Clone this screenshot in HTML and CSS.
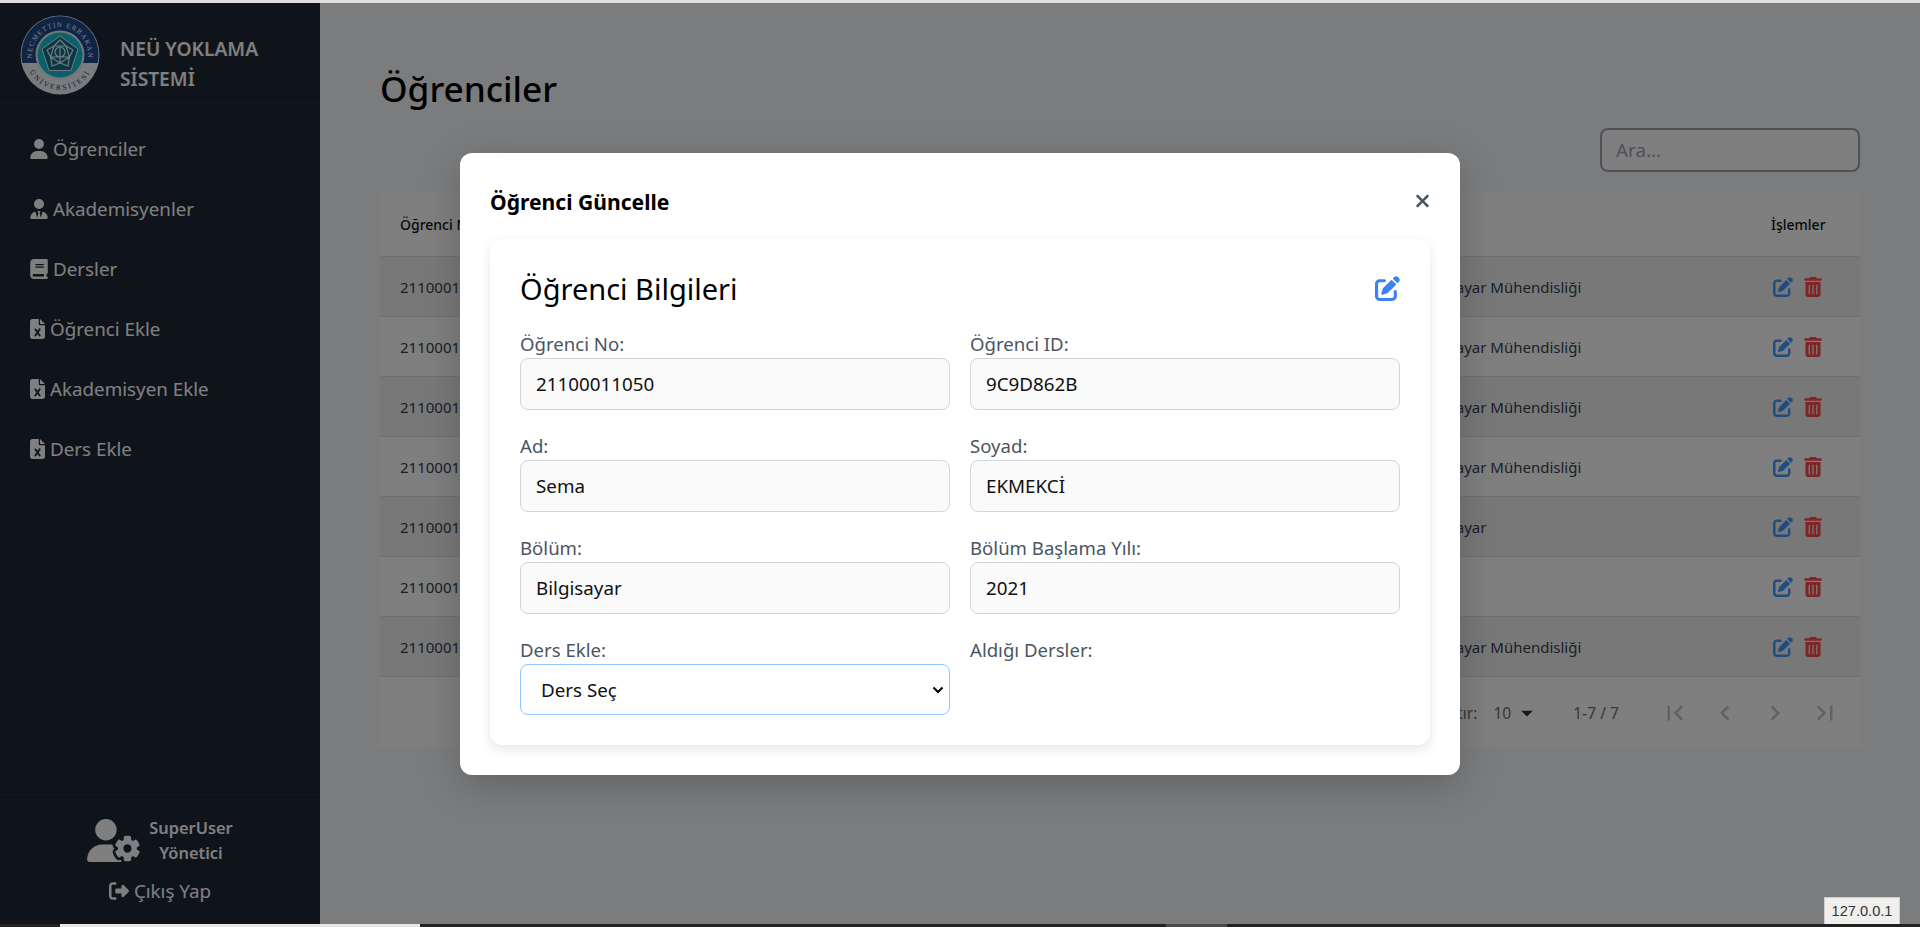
FILE: index.html
```html
<!DOCTYPE html>
<html lang="tr">
<head>
<meta charset="utf-8">
<title>NEÜ Yoklama Sistemi</title>
<link rel="stylesheet" href="styles.css">
</head>
<body>
<svg class="defs" aria-hidden="true">
  <symbol id="i-user" viewBox="0 0 448 512"><path d="M224 256A128 128 0 1 0 224 0a128 128 0 1 0 0 256zm-45.7 48C79.8 304 0 383.8 0 482.3C0 498.7 13.3 512 29.7 512H418.3c16.4 0 29.7-13.3 29.7-29.7C448 383.8 368.2 304 269.7 304H178.3z"/></symbol>
  <symbol id="i-tie" viewBox="0 0 448 512"><path d="M96 128a128 128 0 1 0 256 0A128 128 0 1 0 96 128zm94.5 200.2l18.6 31L175.8 483.1l-36-146.9c-2-8.1-9.8-13.4-17.9-11.3C51.9 342.4 0 405.8 0 481.3c0 17 13.8 30.7 30.7 30.7H162.5c0 0 0 0 .1 0H168 280h5.5c0 0 0 0 .1 0H417.3c17 0 30.7-13.8 30.7-30.7c0-75.5-51.9-138.9-121.9-156.4c-8.1-2-15.9 3.3-17.9 11.3l-36 146.9L238.9 359.2l18.6-31c6.4-10.7-1.3-24.2-13.7-24.2H224 204.3c-12.4 0-20.1 13.6-13.7 24.2z"/></symbol>
  <symbol id="i-book" viewBox="0 0 448 512"><path d="M96 0C43 0 0 43 0 96V416c0 53 43 96 96 96H384h32c17.7 0 32-14.3 32-32s-14.3-32-32-32V384c17.7 0 32-14.3 32-32V32c0-17.7-14.3-32-32-32H384 96zm0 384H352v64H96c-17.7 0-32-14.3-32-32s14.3-32 32-32zm32-240c0-8.8 7.2-16 16-16H336c8.8 0 16 7.2 16 16s-7.2 16-16 16H144c-8.8 0-16-7.2-16-16zm16 48H336c8.8 0 16 7.2 16 16s-7.2 16-16 16H144c-8.8 0-16-7.2-16-16s7.2-16 16-16z"/></symbol>
  <symbol id="i-excel" viewBox="0 0 384 512"><path d="M64 0C28.7 0 0 28.7 0 64V448c0 35.3 28.7 64 64 64H320c35.3 0 64-28.7 64-64V160H256c-17.7 0-32-14.3-32-32V0H64zM256 0V128H384L256 0zM155.7 250.2L192 302.1l36.3-51.9c7.6-10.9 22.6-13.5 33.4-5.9s13.5 22.6 5.9 33.4L221.3 344l46.4 66.2c7.6 10.9 5 25.8-5.9 33.4s-25.8 5-33.4-5.9L192 385.8l-36.3 51.9c-7.6 10.9-22.6 13.5-33.4 5.9s-13.5-22.6-5.9-33.4L162.7 344l-46.4-66.2c-7.6-10.9-5-25.8 5.9-33.4s25.8-5 33.4 5.9z"/></symbol>
  <symbol id="i-gear" viewBox="0 0 640 512"><path d="M224 0a128 128 0 1 1 0 256A128 128 0 1 1 224 0zM178.3 304h91.4c11.8 0 23.4 1.2 34.5 3.3c-2.1 18.5 7.4 35.6 21.8 44.8c-16.6 10.6-26.7 31.6-20 53.3c4 12.9 9.4 25.5 16.4 37.6s15.2 23.1 24.4 33c15.7 16.9 39.6 18.4 57.2 8.7v.9c0 9.2 2.7 18.5 7.9 26.3H29.7C13.3 512 0 498.7 0 482.3C0 383.8 79.8 304 178.3 304zM436 218.2c0-7 4.5-13.3 11.3-14.8c10.5-2.4 21.5-3.7 32.7-3.7s22.2 1.3 32.7 3.7c6.8 1.5 11.3 7.8 11.3 14.8v30.6c7.9 3.4 15.4 7.7 22.3 12.8l24.9-14.3c6.1-3.5 13.7-2.7 18.5 2.4c7.6 8.1 14.3 17.2 20.1 27.2s10.3 20.4 13.5 31c2.1 6.7-1.1 13.7-7.2 17.2l-25 14.4c.4 4 .7 8.1 .7 12.3s-.2 8.2-.7 12.3l25 14.4c6.1 3.5 9.2 10.5 7.2 17.2c-3.3 10.6-7.8 21-13.5 31s-12.5 19.1-20.1 27.2c-4.8 5.1-12.5 5.9-18.5 2.4l-24.9-14.3c-6.9 5.1-14.3 9.4-22.3 12.8l0 30.6c0 7-4.5 13.3-11.3 14.8c-10.5 2.4-21.5 3.7-32.7 3.7s-22.2-1.3-32.7-3.7c-6.8-1.5-11.3-7.8-11.3-14.8V454.8c-8-3.4-15.6-7.7-22.5-12.9l-24.7 14.3c-6.1 3.5-13.7 2.7-18.5-2.4c-7.6-8.1-14.3-17.2-20.1-27.2s-10.3-20.4-13.5-31c-2.1-6.7 1.1-13.7 7.2-17.2l24.8-14.3c-.4-4.1-.7-8.2-.7-12.4s.2-8.3 .7-12.4L343.8 325c-6.1-3.5-9.2-10.5-7.2-17.2c3.3-10.6 7.7-21 13.5-31s12.5-19.1 20.1-27.2c4.8-5.1 12.4-5.9 18.5-2.4l24.8 14.3c6.9-5.1 14.5-9.4 22.5-12.9V218.2zm92.1 133.5a48.1 48.1 0 1 0 -96.1 0 48.1 48.1 0 1 0 96.1 0z"/></symbol>
  <symbol id="i-logout" viewBox="0 0 512 512"><path d="M377.9 105.9L500.7 228.7c7.2 7.2 11.3 17.1 11.3 27.3s-4.1 20.1-11.3 27.3L377.9 406.1c-6.4 6.4-15 9.9-24 9.9c-18.7 0-33.9-15.2-33.9-33.9l0-62.1-128 0c-17.7 0-32-14.3-32-32l0-64c0-17.7 14.3-32 32-32l128 0 0-62.1c0-18.7 15.2-33.9 33.9-33.9c9 0 17.6 3.6 24 9.9zM160 96L96 96c-17.7 0-32 14.3-32 32l0 256c0 17.7 14.3 32 32 32l64 0c17.7 0 32 14.3 32 32s-14.3 32-32 32l-64 0c-53 0-96-43-96-96L0 128C0 75 43 32 96 32l64 0c17.7 0 32 14.3 32 32s-14.3 32-32 32z"/></symbol>
  <symbol id="i-edit" viewBox="0 0 512 512"><path d="M471.6 21.7c-21.9-21.9-57.3-21.9-79.2 0L362.3 51.7l97.9 97.9 30.1-30.1c21.9-21.9 21.9-57.3 0-79.2L471.6 21.7zm-299.2 220c-6.1 6.1-10.8 13.6-13.5 21.9l-29.6 88.8c-2.9 8.6-.6 18.1 5.8 24.6s15.9 8.7 24.6 5.8l88.8-29.6c8.2-2.7 15.7-7.4 21.9-13.5L437.7 172.3 339.7 74.3 172.4 241.7zM96 64C43 64 0 107 0 160V416c0 53 43 96 96 96H352c53 0 96-43 96-96V320c0-17.7-14.3-32-32-32s-32 14.3-32 32v96c0 17.7-14.3 32-32 32H96c-17.7 0-32-14.3-32-32V160c0-17.7 14.3-32 32-32h96c17.7 0 32-14.3 32-32s-14.3-32-32-32H96z"/></symbol>
  <symbol id="i-trash" viewBox="0 0 448 512"><path d="M135.2 17.7C140.6 6.8 151.7 0 163.8 0H284.2c12.1 0 23.2 6.8 28.6 17.7L320 32h96c17.7 0 32 14.3 32 32s-14.3 32-32 32H32C14.3 96 0 81.7 0 64S14.3 32 32 32h96l7.2-14.3zM32 128H416V448c0 35.3-28.7 64-64 64H96c-35.3 0-64-28.7-64-64V128zm96 64c-8.8 0-16 7.2-16 16V432c0 8.8 7.2 16 16 16s16-7.2 16-16V208c0-8.8-7.2-16-16-16zm96 0c-8.8 0-16 7.2-16 16V432c0 8.8 7.2 16 16 16s16-7.2 16-16V208c0-8.8-7.2-16-16-16zm96 0c-8.8 0-16 7.2-16 16V432c0 8.8 7.2 16 16 16s16-7.2 16-16V208c0-8.8-7.2-16-16-16z"/></symbol>
  <symbol id="i-x" viewBox="0 0 384 512"><path d="M342.6 150.6c12.5-12.5 12.5-32.8 0-45.3s-32.8-12.5-45.3 0L192 210.7 86.6 105.4c-12.5-12.5-32.8-12.5-45.3 0s-12.5 32.8 0 45.3L146.7 256 41.4 361.4c-12.5 12.5-12.5 32.8 0 45.3s32.8 12.5 45.3 0L192 301.3 297.4 406.6c12.5 12.5 32.8 12.5 45.3 0s12.5-32.8 0-45.3L237.3 256 342.6 150.6z"/></symbol>
  <symbol id="i-first" viewBox="0 0 24 24"><path d="M18.41 16.59L13.82 12l4.59-4.59L17 6l-6 6 6 6zM6 6h2v12H6z"/></symbol>
  <symbol id="i-prev" viewBox="0 0 24 24"><path d="M15.41 16.59L10.83 12l4.58-4.59L14 6l-6 6 6 6z"/></symbol>
  <symbol id="i-next" viewBox="0 0 24 24"><path d="M8.59 16.59L13.17 12 8.59 7.41 10 6l6 6-6 6z"/></symbol>
  <symbol id="i-last" viewBox="0 0 24 24"><path d="M5.59 7.41L10.18 12l-4.59 4.59L7 18l6-6-6-6zM16 6h2v12h-2z"/></symbol>
  <symbol id="i-caret" viewBox="0 0 24 24"><path d="M7 10l5 5 5-5z"/></symbol>
</svg>

<div class="strip-top"></div>

<div class="app">
  <aside class="sidebar">
    <header class="brand">
      <svg class="logo" viewBox="0 0 80 80" role="img" aria-label="Necmettin Erbakan Üniversitesi">
        <defs>
          <path id="arc-top" d="M13.5 49 A28 28 0 1 1 66.5 49"/>
          <path id="arc-bottom" d="M6.8 51 A35 35 0 0 0 73.2 51"/>
        </defs>
        <circle class="l-rim" cx="40" cy="40" r="39.5"/>
        <path class="l-navy" d="M2.4 48 A38.5 38.5 0 1 1 77.6 48 Z"/>
        <text class="l-text"><textPath href="#arc-top" startOffset="50%" text-anchor="middle">NECMETTİN ERBAKAN</textPath></text>
        <text class="l-text-b"><textPath href="#arc-bottom" startOffset="50%" text-anchor="middle">ÜNİVERSİTESİ</textPath></text>
        <circle class="l-ring" cx="40" cy="40" r="24.5"/>
        <circle class="l-teal" cx="40" cy="40" r="22.5"/>
        <path class="l-star" d="M40 21 L58 34 L51 55.5 L29 55.5 L22 34 Z"/>
        <path class="l-knot" d="M40 25 L46 31 L53 35 L49.5 42 L48 51 L40 48 L32 51 L30.5 42 L27 35 L34 31 Z M34 31 L46 31 L49.5 42 L40 48 L30.5 42 Z M40 31 V48 M30.5 42 L49.5 42 M35 37 a5 5 0 1 0 10 0 a5 5 0 1 0 -10 0"/>
      </svg>
      <div class="brand-name">NEÜ YOKLAMA SİSTEMİ</div>
    </header>

    <nav class="menu">
      <a class="menu-item"><svg class="ic ic-u"><use href="#i-user"/></svg>Öğrenciler</a>
      <a class="menu-item"><svg class="ic ic-u"><use href="#i-tie"/></svg>Akademisyenler</a>
      <a class="menu-item"><svg class="ic ic-u"><use href="#i-book"/></svg>Dersler</a>
      <a class="menu-item"><svg class="ic ic-f"><use href="#i-excel"/></svg>Öğrenci Ekle</a>
      <a class="menu-item"><svg class="ic ic-f"><use href="#i-excel"/></svg>Akademisyen Ekle</a>
      <a class="menu-item"><svg class="ic ic-f"><use href="#i-excel"/></svg>Ders Ekle</a>
    </nav>

    <footer class="side-foot">
      <div class="who">
        <svg class="ic-who"><use href="#i-gear"/></svg>
        <div class="who-text">SuperUser<br>Yönetici</div>
      </div>
      <a class="logout"><svg class="ic-out"><use href="#i-logout"/></svg>Çıkış Yap</a>
    </footer>
  </aside>

  <main class="content">
    <h1 class="page-title">Öğrenciler</h1>
    <div class="tools">
      <input class="search" type="text" placeholder="Ara...">
    </div>
    <section class="table-box">
      <table class="grid">
        <colgroup>
          <col class="c1"><col class="c2"><col class="c3"><col class="c4"><col class="c5">
        </colgroup>
        <thead>
          <tr><th>Öğrenci No</th><th>Ad</th><th>Soyad</th><th class="th-dept">Bölüm</th><th>İşlemler</th></tr>
        </thead>
        <tbody>
          <tr><td>21100011050</td><td>Sema</td><td>EKMEKCİ</td><td>Bilgisayar Mühendisliği</td><td><span class="acts"><svg class="a-edit"><use href="#i-edit"/></svg><svg class="a-del"><use href="#i-trash"/></svg></span></td></tr>
          <tr><td>21100011051</td><td>Ali</td><td>YILMAZ</td><td>Bilgisayar Mühendisliği</td><td><span class="acts"><svg class="a-edit"><use href="#i-edit"/></svg><svg class="a-del"><use href="#i-trash"/></svg></span></td></tr>
          <tr><td>21100011052</td><td>Ayşe</td><td>KAYA</td><td>Bilgisayar Mühendisliği</td><td><span class="acts"><svg class="a-edit"><use href="#i-edit"/></svg><svg class="a-del"><use href="#i-trash"/></svg></span></td></tr>
          <tr><td>21100011053</td><td>Mehmet</td><td>DEMİR</td><td>Bilgisayar Mühendisliği</td><td><span class="acts"><svg class="a-edit"><use href="#i-edit"/></svg><svg class="a-del"><use href="#i-trash"/></svg></span></td></tr>
          <tr><td>21100011054</td><td>Zeynep</td><td>ÇELİK</td><td>Bilgisayar</td><td><span class="acts"><svg class="a-edit"><use href="#i-edit"/></svg><svg class="a-del"><use href="#i-trash"/></svg></span></td></tr>
          <tr><td>21100011055</td><td>Can</td><td>ŞAHİN</td><td>Fizik</td><td><span class="acts"><svg class="a-edit"><use href="#i-edit"/></svg><svg class="a-del"><use href="#i-trash"/></svg></span></td></tr>
          <tr><td>21100011056</td><td>Elif</td><td>ARSLAN</td><td>Bilgisayar Mühendisliği</td><td><span class="acts"><svg class="a-edit"><use href="#i-edit"/></svg><svg class="a-del"><use href="#i-trash"/></svg></span></td></tr>
        </tbody>
      </table>
      <div class="pager">
        <span class="pg-label">Sayfa başına satır:</span>
        <span class="pg-size">10<svg class="pg-caret"><use href="#i-caret"/></svg></span>
        <span class="pg-range">1-7 / 7</span>
        <span class="pg-btns">
          <svg class="pg-ic"><use href="#i-first"/></svg>
          <svg class="pg-ic"><use href="#i-prev"/></svg>
          <svg class="pg-ic"><use href="#i-next"/></svg>
          <svg class="pg-ic"><use href="#i-last"/></svg>
        </span>
      </div>
    </section>
  </main>

  <div class="overlay">
    <div class="modal">
      <div class="modal-head">
        <h2 class="modal-title">Öğrenci Güncelle</h2>
        <svg class="modal-x"><use href="#i-x"/></svg>
      </div>
      <div class="card">
        <div class="card-head">
          <h3 class="card-title">Öğrenci Bilgileri</h3>
          <svg class="card-edit"><use href="#i-edit"/></svg>
        </div>
        <div class="form">
          <label class="field"><span class="lbl">Öğrenci No:</span><input class="inp" value="21100011050" readonly></label>
          <label class="field"><span class="lbl">Öğrenci ID:</span><input class="inp" value="9C9D862B" readonly></label>
          <label class="field"><span class="lbl">Ad:</span><input class="inp" value="Sema" readonly></label>
          <label class="field"><span class="lbl">Soyad:</span><input class="inp" value="EKMEKCİ" readonly></label>
          <label class="field"><span class="lbl">Bölüm:</span><input class="inp" value="Bilgisayar" readonly></label>
          <label class="field"><span class="lbl">Bölüm Başlama Yılı:</span><input class="inp" value="2021" readonly></label>
          <label class="field"><span class="lbl">Ders Ekle:</span><select class="sel"><option>Ders Seç</option></select></label>
          <div class="field"><span class="lbl">Aldığı Dersler:</span></div>
        </div>
      </div>
    </div>
  </div>

  <div class="host-tip">127.0.0.1</div>
</div>

<div class="strip-bottom">
  <span class="sb-a"></span><span class="sb-b"></span><span class="sb-c"></span><span class="sb-d"></span><span class="sb-e"></span>
</div>
</body>
</html>
```

FILE: styles.css
```css
* { box-sizing: border-box; }
html, body { height: 100%; }
body {
  margin: 0;
  height: 927px;
  overflow: hidden;
  display: flex;
  flex-direction: column;
  font-family: "Noto Sans", "Open Sans", sans-serif;
  background: #f7f9fc;
}
.defs { display: none; }
h1, h2, h3 { margin: 0; }

.strip-top { height: 3px; background: #dedede; flex: none; }

.strip-bottom { height: 3px; flex: none; display: flex; background: #222; }
.sb-a { width: 60px; }
.sb-b { width: 360px; background: #e6e6e6; }
.sb-c { width: 746px; }
.sb-d { width: 61px; background: #4a4a4a; }
.sb-e { flex: 1; }

.app { position: relative; height: 921px; flex: none; display: flex; overflow: hidden; }

/* sidebar */
.sidebar {
  width: 320px;
  flex: none;
  display: flex;
  flex-direction: column;
  background: #1f2937;
  color: #fff;
}
.brand {
  height: 100px;
  display: flex;
  align-items: center;
  gap: 20px;
  padding: 5px 20px 0;
  border-bottom: 1px solid #2a3442;
}
.logo { width: 80px; height: 80px; flex: none; }
.l-rim { fill: #f0f8ff; }
.l-navy { fill: #1e4a8c; }
.l-text { fill: #fff; font: 400 7px "Liberation Serif", serif; letter-spacing: 1.1px; }
.l-text-b { fill: #1e3a5c; font: 400 7.4px "Liberation Serif", serif; letter-spacing: 2px; }
.l-ring { fill: #e6edf2; }
.l-teal { fill: #18c0d8; }
.l-star { fill: #146f8c; stroke: #e8f4f8; stroke-width: 1; stroke-linejoin: round; }
.l-knot { fill: none; stroke: #e8f4f8; stroke-width: 1.2; stroke-linejoin: round; }
.brand-name { width: 170px; margin-top: 18px; font-size: 19.2px; font-weight: 600; line-height: 30px; }

.menu { flex: 1; padding-top: 16px; }
.menu-item {
  height: 60px;
  display: flex;
  align-items: center;
  gap: 5px;
  padding-left: 30px;
  font-size: 18.8px;
  color: #fff;
}
.ic { height: 20px; fill: #fff; flex: none; }
.ic-u { width: 18px; }
.ic-f { width: 15px; }

.side-foot {
  height: 130px;
  padding-top: 20px;
  border-top: 1px solid #2a3442;
  display: flex;
  flex-direction: column;
  align-items: center;
  gap: 13px;
}
.who { height: 50px; display: flex; align-items: center; gap: 8px; }
.ic-who { width: 54px; height: 43px; fill: #fff; }
.who-text { font-size: 16.4px; font-weight: 600; line-height: 25px; text-align: center; }
.logout { display: flex; align-items: center; gap: 5px; height: 26px; font-size: 18.8px; }
.ic-out { width: 20px; height: 20px; fill: #fff; }

/* main */
.content { flex: 1; min-width: 0; padding: 0 60px; background: #f7f9fc; }
.page-title { margin-top: 58px; height: 54px; font-size: 35.2px; line-height: 54px; font-weight: 500; color: #000; }
.tools { display: flex; justify-content: flex-end; margin-top: 13px; }
.search {
  width: 260px;
  height: 44px;
  padding: 0 14px;
  border: 2px solid #9ca3af;
  border-radius: 8px;
  background: #fff;
  font: 18.8px "Noto Sans", sans-serif;
}
.search::placeholder { color: #9ca3af; opacity: 1; }
.table-box { margin-top: 20px; background: #fff; }
.grid { width: 1480px; table-layout: fixed; border-collapse: collapse; }
.c1 { width: 240px; } .c2 { width: 300px; } .c3 { width: 478px; } .c4 { width: 353px; } .c5 { width: 109px; }
.grid th {
  height: 64px;
  padding: 2px 20px 0;
  text-align: left;
  font-size: 14px;
  font-weight: 500;
  color: #111;
  white-space: nowrap;
  border-bottom: 1px solid #e0e0e0;
}
.grid .th-dept { padding-left: 10px; }
.grid td {
  height: 60px;
  padding: 2px 20px 0;
  font-size: 15px;
  color: #374151;
  border-bottom: 1px solid #e0e0e0;
}
.grid tbody tr:nth-child(odd) { background: #f0f0f0; }
.acts { display: flex; align-items: center; gap: 11px; padding-left: 2px; }
.a-edit { width: 20px; height: 20px; fill: #3f9bff; }
.a-del { width: 18px; height: 20px; fill: #ff4a4a; }

.pager {
  height: 70px;
  display: flex;
  align-items: center;
  justify-content: flex-end;
  padding: 2px 20px 0 0;
  font-size: 15.6px;
  color: #6e6e6e;
}
.pg-label { margin-right: 16px; }
.pg-size { display: flex; align-items: center; }
.pg-caret { width: 28px; height: 28px; fill: #333; margin-left: 2px; }
.pg-range { margin-left: 32px; }
.pg-btns { display: flex; gap: 20px; margin-left: 41px; }
.pg-ic { width: 30px; height: 30px; fill: #c4c4c4; }

/* overlay + modal */
.overlay {
  position: absolute;
  inset: 0;
  padding-top: 1px;
  display: flex;
  align-items: center;
  justify-content: center;
  background: rgba(0, 0, 0, .5);
}
.modal {
  width: 1000px;
  padding: 30px;
  background: #fff;
  border-radius: 12px;
  box-shadow: 0 10px 40px rgba(0, 0, 0, .2);
}
.modal-head { height: 36px; margin-bottom: 20px; display: flex; align-items: center; justify-content: space-between; }
.modal-title { font-size: 21.1px; font-weight: 700; color: #000; }
.modal-x { width: 15px; height: 20px; fill: #4b5563; }
.card {
  padding: 30px;
  border-radius: 12px;
  background: #fff;
  box-shadow: 0 4px 12px rgba(0, 0, 0, .1);
}
.card-head { height: 38px; margin-bottom: 24px; display: flex; align-items: center; justify-content: space-between; }
.card-title { font-size: 29px; font-weight: 400; color: #000; }
.card-edit { width: 25px; height: 25px; fill: #3b82f6; }
.form { display: grid; grid-template-columns: 430px 430px; column-gap: 20px; row-gap: 23px; }
.field { display: flex; flex-direction: column; }
.lbl { height: 27px; line-height: 25px; font-size: 18.6px; color: #4b5563; }
.inp {
  height: 52px;
  padding: 0 15px;
  border: 1px solid #d1d5db;
  border-radius: 8px;
  background: #fafafa;
  color: #111;
  font: 18.8px "Noto Sans", sans-serif;
}
.sel {
  height: 51px;
  padding: 0 20px;
  appearance: none;
  border: 1px solid #93c5fd;
  border-radius: 8px;
  background: #fff url("data:image/svg+xml,%3Csvg xmlns='http://www.w3.org/2000/svg' width='12' height='8' viewBox='0 0 12 8'%3E%3Cpath d='M1.5 1.5 6 6l4.5-4.5' fill='none' stroke='%23000' stroke-width='2'/%3E%3C/svg%3E") no-repeat right 5px center;
  color: #111;
  font: 18.8px "Noto Sans", sans-serif;
}

.host-tip {
  position: absolute;
  right: 20px;
  bottom: 0;
  width: 76px;
  height: 27px;
  text-align: center;
  font: 14.6px/27px "Liberation Sans", Arial, sans-serif;
  color: #333;
  background: #f1eeee;
  border: 1px solid #cfcfcf;
  border-bottom: 0;
}
```
